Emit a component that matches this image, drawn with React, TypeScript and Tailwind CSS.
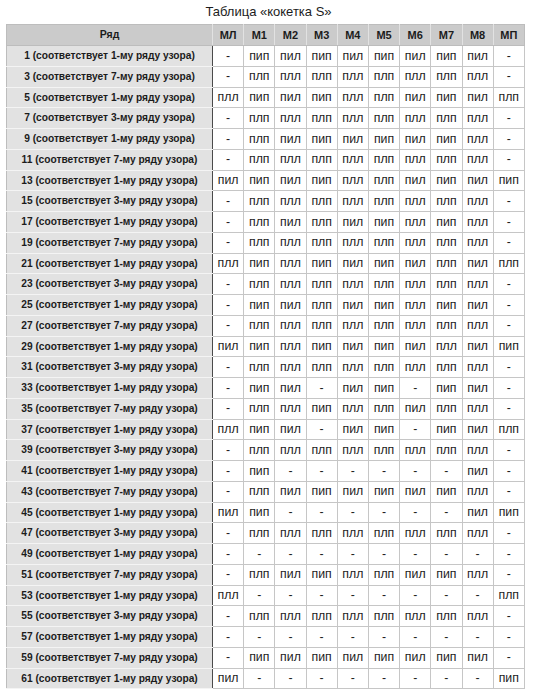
import React from "react";

const cols = ["МЛ", "М1", "М2", "М3", "М4", "М5", "М6", "М7", "М8", "МП"];

const rows: [number, number, string[]][] = [
  [1, 1, ["-", "пип", "пил", "пип", "пил", "пип", "пил", "пип", "пил", "-"]],
  [3, 7, ["-", "плп", "плл", "плп", "плл", "плп", "плл", "плп", "плл", "-"]],
  [5, 1, ["плл", "пип", "пил", "пип", "плл", "плп", "пил", "пип", "пил", "плп"]],
  [7, 3, ["-", "плп", "плл", "плп", "плл", "плп", "плл", "плп", "плл", "-"]],
  [9, 1, ["-", "плп", "пил", "пип", "пил", "пип", "пил", "пип", "плл", "-"]],
  [11, 7, ["-", "плп", "плл", "плп", "плл", "плп", "плл", "плп", "плл", "-"]],
  [13, 1, ["пил", "пип", "пил", "пип", "плл", "плп", "пил", "пип", "пил", "пип"]],
  [15, 3, ["-", "плп", "плл", "плп", "плл", "плп", "плл", "плп", "плл", "-"]],
  [17, 1, ["-", "плп", "пил", "плп", "пил", "пип", "плл", "пип", "плл", "-"]],
  [19, 7, ["-", "плп", "плл", "плп", "плл", "плп", "плл", "плп", "плл", "-"]],
  [21, 1, ["плл", "пип", "плл", "пип", "пил", "пип", "пил", "плп", "пил", "плп"]],
  [23, 3, ["-", "плп", "плл", "плп", "плл", "плп", "плл", "плп", "плл", "-"]],
  [25, 1, ["-", "пип", "пил", "плп", "пил", "пип", "плл", "пип", "пил", "-"]],
  [27, 7, ["-", "плп", "плл", "плп", "плл", "плп", "плл", "плп", "плл", "-"]],
  [29, 1, ["пил", "пип", "плл", "пип", "пил", "пип", "пил", "плл", "пил", "пип"]],
  [31, 3, ["-", "плп", "плл", "плп", "плл", "плп", "плл", "плп", "плл", "-"]],
  [33, 1, ["-", "пип", "пил", "-", "пил", "пип", "-", "пип", "пил", "-"]],
  [35, 7, ["-", "плп", "плл", "пип", "плл", "плп", "пил", "плп", "плл", "-"]],
  [37, 1, ["плл", "пип", "пил", "-", "пил", "пип", "-", "пип", "пил", "плп"]],
  [39, 3, ["-", "плп", "плл", "плп", "плл", "плп", "плл", "плп", "плл", "-"]],
  [41, 1, ["-", "пип", "-", "-", "-", "-", "-", "-", "пил", "-"]],
  [43, 7, ["-", "плп", "пил", "пип", "пил", "пип", "пил", "пип", "плл", "-"]],
  [45, 1, ["пил", "пип", "-", "-", "-", "-", "-", "-", "пил", "пип"]],
  [47, 3, ["-", "плп", "плл", "плп", "плл", "плп", "плл", "плп", "плл", "-"]],
  [49, 1, ["-", "-", "-", "-", "-", "-", "-", "-", "-", "-"]],
  [51, 7, ["-", "плп", "пил", "пип", "плл", "плп", "пил", "пип", "плл", "-"]],
  [53, 1, ["плл", "-", "-", "-", "-", "-", "-", "-", "-", "плп"]],
  [55, 3, ["-", "плп", "плл", "плп", "плл", "плп", "плл", "плп", "плл", "-"]],
  [57, 1, ["-", "-", "-", "-", "-", "-", "-", "-", "-", "-"]],
  [59, 7, ["-", "пип", "пил", "пип", "пил", "пип", "пил", "пип", "пил", "-"]],
  [61, 1, ["пил", "-", "-", "-", "-", "-", "-", "-", "-", "пип"]],
];

export default function App() {
  return (
    <div
      className="w-[537px] h-[699px] bg-white text-[#1c1c1c]"
      style={{ fontFamily: '"Liberation Sans", Arial, sans-serif' }}
    >
      <div className="h-[24px] flex items-center justify-center text-[13px]">
        Таблица «кокетка S»
      </div>
      <table className="ml-[6px] w-[518px] table-fixed border-collapse">
        <colgroup>
          <col className="w-[206px]" />
          {cols.map((c) => (
            <col key={c} className="w-[31.2px]" />
          ))}
        </colgroup>
        <thead>
          <tr className="h-[21px] bg-[#cbcbcb]">
            <th className="border border-[#bdbdbd] border-r-[#e2e2e2] text-[10.5px] font-bold p-0 text-center">
              Ряд
            </th>
            {cols.map((c, i) => (
              <th
                key={c}
                className={
                  i === cols.length - 1
                    ? "border-y border-r border-[#bdbdbd] text-[11px] font-bold p-0 text-center"
                    : "border-y border-r border-[#bdbdbd] border-r-[#e2e2e2] text-[11px] font-bold p-0 text-center"
                }
              >
                {c}
              </th>
            ))}
          </tr>
        </thead>
        <tbody>
          {rows.map(([n, p, cells]) => (
            <tr key={n} className="h-[20.75px]">
              <td className="bg-[#e2e2e2] border-l border-b border-l-[#bdbdbd] border-b-[#f4f4f4] border-r border-r-[#4a4a4a] text-[10.2px] font-bold text-center p-0 whitespace-nowrap">
                {n} (соответствует {p}-му ряду узора)
              </td>
              {cells.map((v, j) => (
                <td
                  key={j}
                  className="border border-[#c6c6c6] text-[12.3px] text-center p-0 whitespace-nowrap"
                >
                  {v}
                </td>
              ))}
            </tr>
          ))}
        </tbody>
      </table>
    </div>
  );
}
